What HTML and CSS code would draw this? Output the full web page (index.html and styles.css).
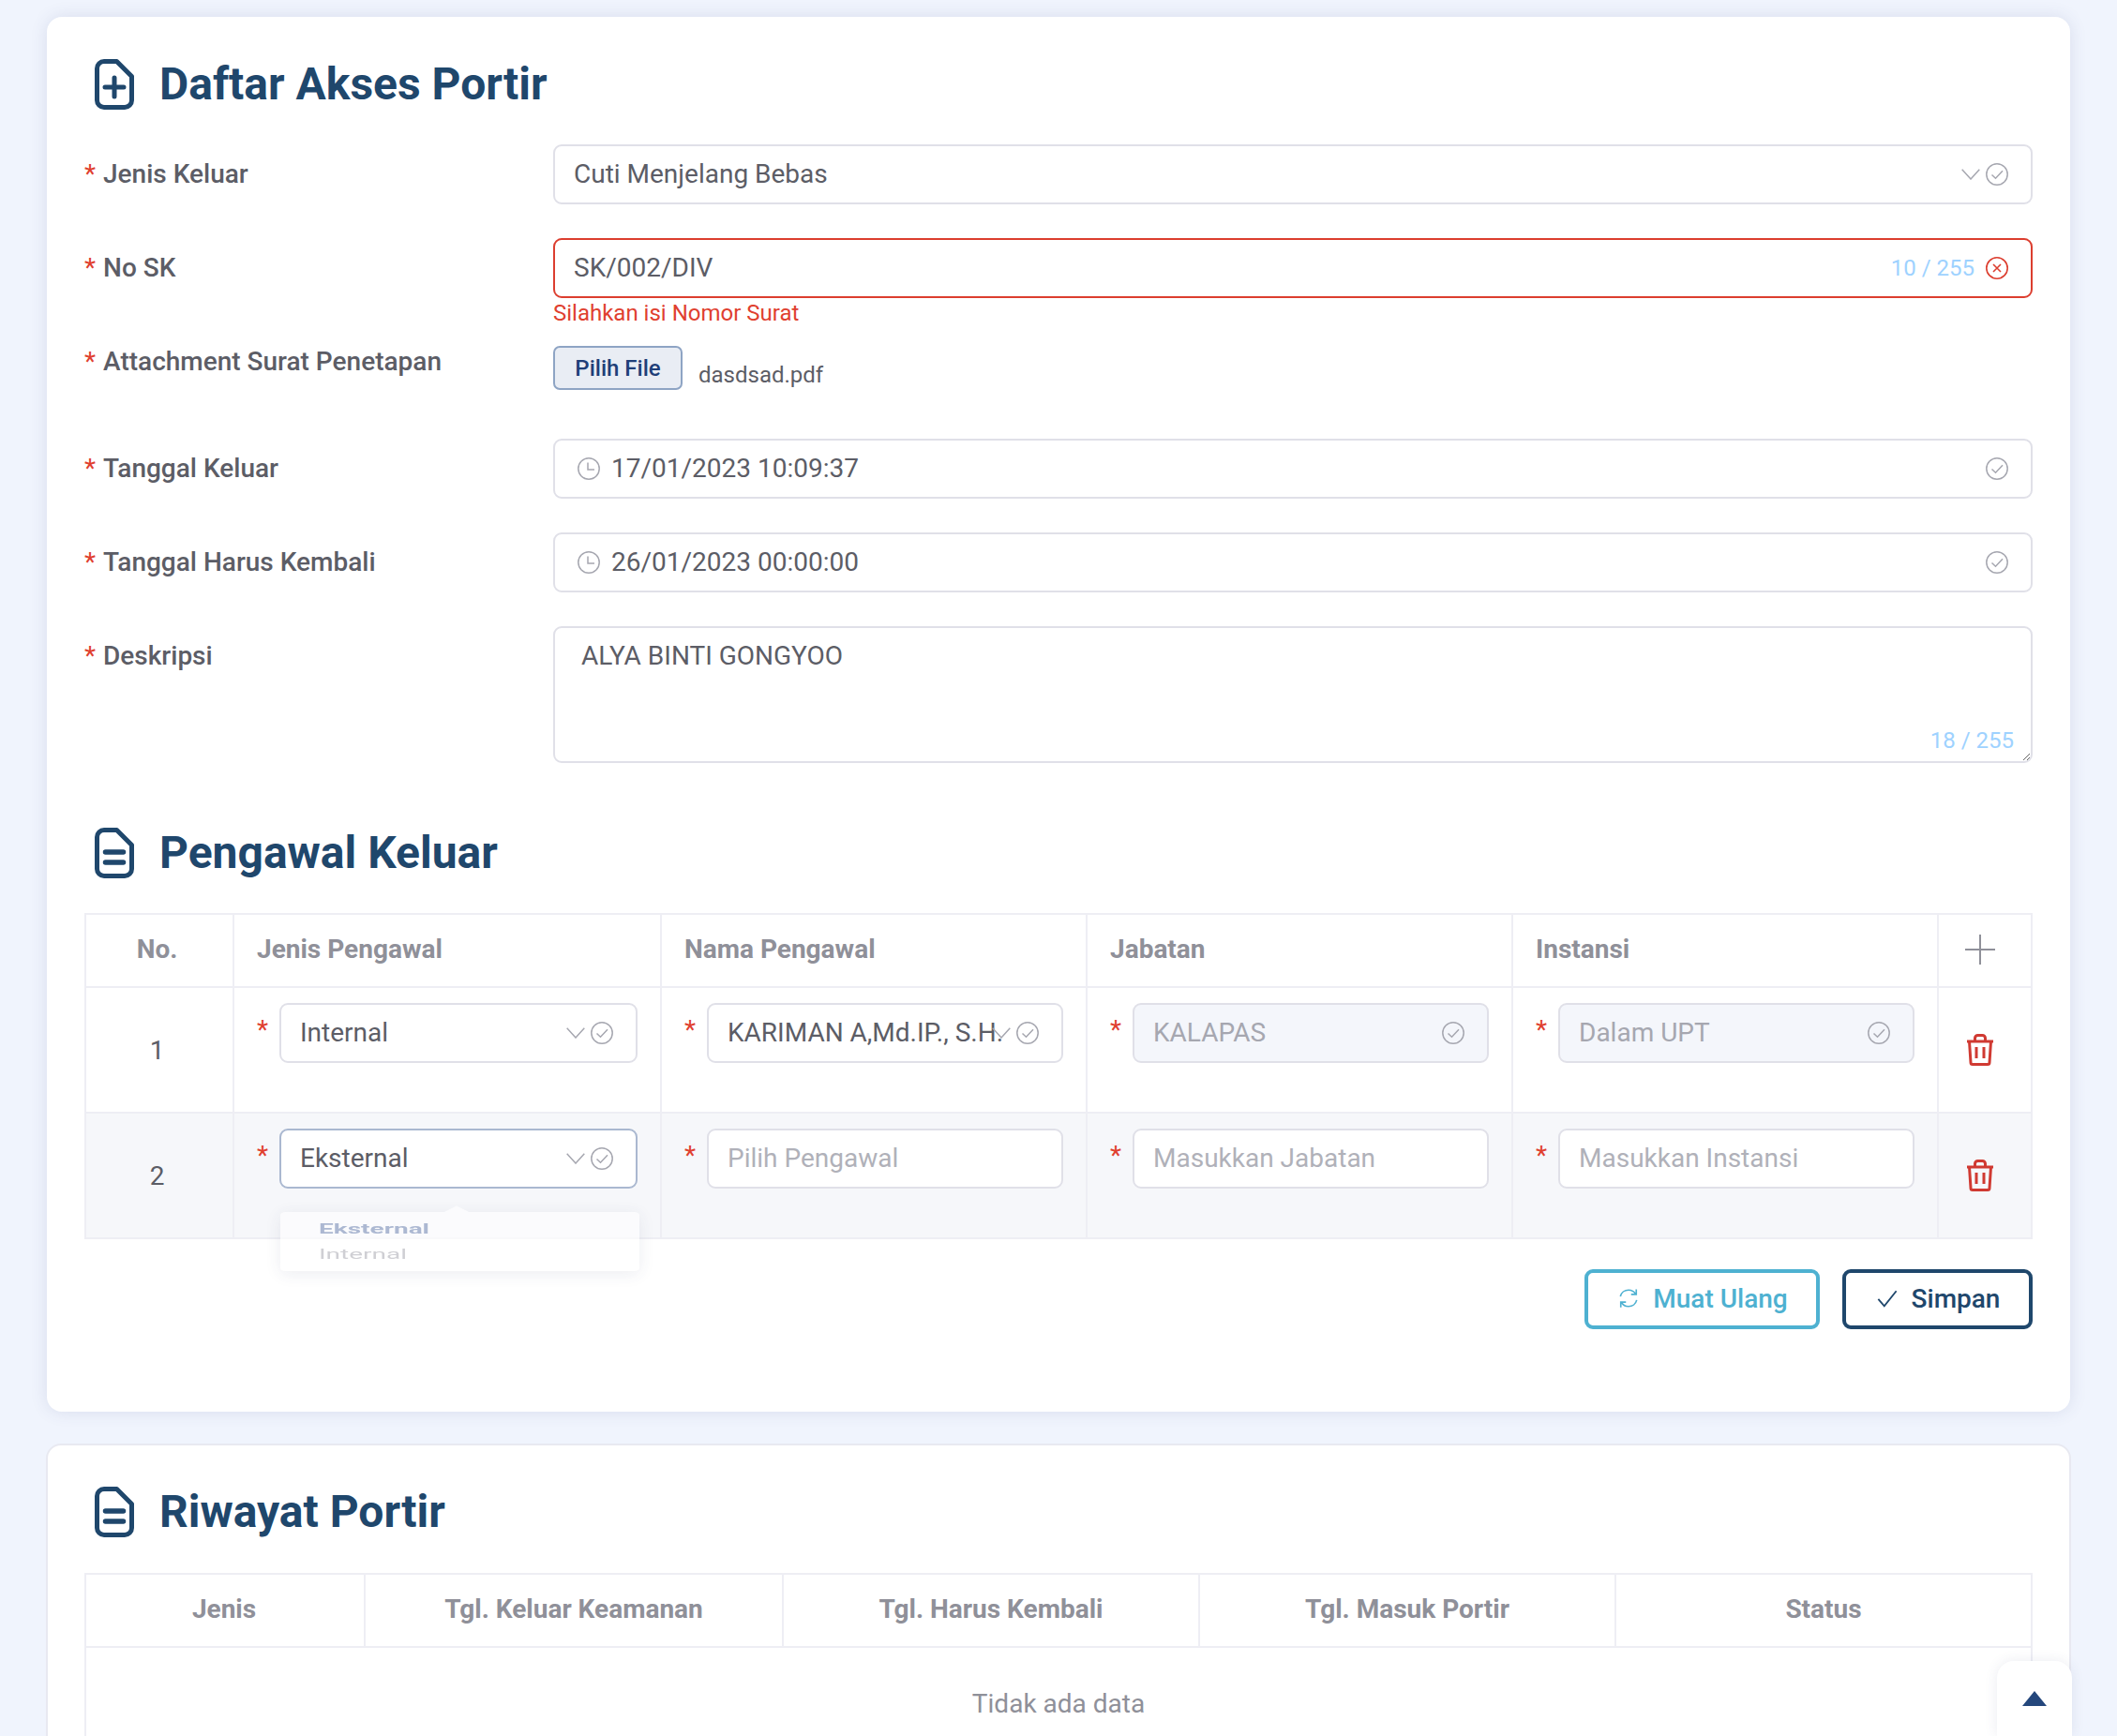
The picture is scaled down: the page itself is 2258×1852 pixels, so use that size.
FILE: index.html
```html
<!DOCTYPE html>
<html lang="id">
<head>
<meta charset="utf-8">
<title>Daftar Akses Portir</title>
<link rel="stylesheet" href="styles.css">
</head>
<body>
<svg class="defs" width="0" height="0" aria-hidden="true">
  <symbol id="i-doc" viewBox="0 0 42 54"><path d="M10 2.500H23.500L39.500 18.500V44a7.500 7.500 0 0 1-7.500 7.500H10A7.500 7.500 0 0 1 2.500 44V10A7.500 7.500 0 0 1 10 2.500z" fill="none" stroke="currentColor" stroke-width="5" stroke-linejoin="round"/></symbol>
  <symbol id="i-chev" viewBox="0 0 20 12"><path d="M.7.8 10 11 19.300.8" fill="none" stroke="currentColor" stroke-width="1.500"/></symbol>
  <symbol id="i-ok" viewBox="0 0 24 24"><circle cx="12" cy="12" r="11.200" fill="none" stroke="currentColor" stroke-width="1.500"/><path d="M6.500 12.500l4 3.800 7.500-8" fill="none" stroke="currentColor" stroke-width="1.500"/></symbol>
  <symbol id="i-err" viewBox="0 0 24 24"><circle cx="12" cy="12" r="11.200" fill="none" stroke="currentColor" stroke-width="1.600"/><path d="M8 8l8 8M16 8l-8 8" fill="none" stroke="currentColor" stroke-width="1.600"/></symbol>
  <symbol id="i-clock" viewBox="0 0 24 24"><circle cx="12" cy="12" r="11.200" fill="none" stroke="currentColor" stroke-width="1.500"/><path d="M11 5.500V13h7" fill="none" stroke="currentColor" stroke-width="1.500"/></symbol>
  <symbol id="i-trash" viewBox="0 0 30 34"><path d="M1 8h28M9.500 7V4.500a3 3 0 0 1 3-3h5a3 3 0 0 1 3 3V7M3.500 8l1.500 22.500a2 2 0 0 0 2 2h16a2 2 0 0 0 2-2L26.500 8M11 14v12M19 14v12" fill="none" stroke="currentColor" stroke-width="3"/></symbol>
</svg>

<main class="page">
  <section class="card">
    <h1 class="title">
      <svg class="title-icon"><use href="#i-doc"/><path d="M21 20v20M11 30h20" stroke="currentColor" stroke-width="5" stroke-linecap="round"/></svg>
      Daftar Akses Portir
    </h1>

    <div class="row">
      <div class="label"><span class="req">*</span>Jenis Keluar</div>
      <div class="control">
        <div class="input"><span class="val">Cuti Menjelang Bebas</span><svg class="chev"><use href="#i-chev"/></svg><svg class="ok"><use href="#i-ok"/></svg></div>
      </div>
    </div>

    <div class="row">
      <div class="label"><span class="req">*</span>No SK</div>
      <div class="control">
        <div class="input input-error"><span class="val">SK/002/DIV</span><span class="count">10 / 255</span><svg class="ok"><use href="#i-err"/></svg></div>
        <div class="error">Silahkan isi Nomor Surat</div>
      </div>
    </div>

    <div class="row row-file">
      <div class="label"><span class="req">*</span>Attachment Surat Penetapan</div>
      <div class="control file-control">
        <button class="file-btn" type="button">Pilih File</button>
        <span class="file-name">dasdsad.pdf</span>
      </div>
    </div>

    <div class="row">
      <div class="label"><span class="req">*</span>Tanggal Keluar</div>
      <div class="control">
        <div class="input"><svg class="clock"><use href="#i-clock"/></svg><span class="val">17/01/2023 10:09:37</span><svg class="ok"><use href="#i-ok"/></svg></div>
      </div>
    </div>

    <div class="row">
      <div class="label"><span class="req">*</span>Tanggal Harus Kembali</div>
      <div class="control">
        <div class="input"><svg class="clock"><use href="#i-clock"/></svg><span class="val">26/01/2023 00:00:00</span><svg class="ok"><use href="#i-ok"/></svg></div>
      </div>
    </div>

    <div class="row row-area">
      <div class="label"><span class="req">*</span>Deskripsi</div>
      <div class="control area-wrap">
        <textarea class="area" rows="3">ALYA BINTI GONGYOO</textarea>
        <span class="count area-count">18 / 255</span>
      </div>
    </div>

    <h2 class="title title-second">
      <svg class="title-icon"><use href="#i-doc"/><path d="M11.500 26h19M11.500 37h19" stroke="currentColor" stroke-width="5.500" stroke-linecap="round"/></svg>
      Pengawal Keluar
    </h2>

    <table class="grid grid-escort">
      <colgroup><col class="c-no"><col class="c-wide"><col class="c-mid"><col class="c-mid"><col class="c-mid"><col class="c-act"></colgroup>
      <thead>
        <tr>
          <th class="center cell-no">No.</th><th>Jenis Pengawal</th><th>Nama Pengawal</th><th>Jabatan</th><th>Instansi</th>
          <th class="center cell-act"><svg class="plus" viewBox="0 0 32 32"><path d="M16 0v32M0 16h32" stroke="currentColor" stroke-width="2"/></svg></th>
        </tr>
      </thead>
      <tbody>
        <tr>
          <td class="center cell-no">1</td>
          <td class="cell-field"><div class="field"><span class="req">*</span><div class="input"><span class="val">Internal</span><svg class="chev"><use href="#i-chev"/></svg><svg class="ok"><use href="#i-ok"/></svg></div></div></td>
          <td class="cell-field"><div class="field"><span class="req">*</span><div class="input"><span class="val">KARIMAN A,Md.IP., S.H.</span><svg class="chev"><use href="#i-chev"/></svg><svg class="ok"><use href="#i-ok"/></svg></div></div></td>
          <td class="cell-field"><div class="field"><span class="req">*</span><div class="input input-off"><span class="val">KALAPAS</span><svg class="ok"><use href="#i-ok"/></svg></div></div></td>
          <td class="cell-field"><div class="field"><span class="req">*</span><div class="input input-off"><span class="val">Dalam UPT</span><svg class="ok"><use href="#i-ok"/></svg></div></div></td>
          <td class="center cell-act"><svg class="trash"><use href="#i-trash"/></svg></td>
        </tr>
        <tr class="row-alt">
          <td class="center cell-no">2</td>
          <td class="cell-field"><div class="field"><span class="req">*</span>
            <div class="input input-focus"><span class="val">Eksternal</span><svg class="chev"><use href="#i-chev"/></svg><svg class="ok"><use href="#i-ok"/></svg>
              <div class="dropdown"><div class="opt opt-on">Eksternal</div><div class="opt">Internal</div></div>
            </div></div></td>
          <td class="cell-field"><div class="field"><span class="req">*</span><div class="input"><span class="val ph">Pilih Pengawal</span></div></div></td>
          <td class="cell-field"><div class="field"><span class="req">*</span><div class="input"><span class="val ph">Masukkan Jabatan</span></div></div></td>
          <td class="cell-field"><div class="field"><span class="req">*</span><div class="input"><span class="val ph">Masukkan Instansi</span></div></div></td>
          <td class="center cell-act"><svg class="trash"><use href="#i-trash"/></svg></td>
        </tr>
      </tbody>
    </table>

    <div class="actions">
      <button class="btn btn-reload" type="button">
        <svg class="btn-icon" viewBox="0 0 24 24"><path d="M2.500 10C3.500 5.500 7.500 2.500 12 2.500c3.500 0 6.500 1.700 8 4.500M21.500 14c-1 4.500-5 7.500-9.500 7.500-3.500 0-6.500-1.700-8-4.500M21 1.500V7.500h-6M3 22.500V16.500h6" fill="none" stroke="currentColor" stroke-width="1.800"/></svg>
        Muat Ulang
      </button>
      <button class="btn btn-save" type="button">
        <svg class="btn-icon" viewBox="0 0 24 24"><path d="M1.500 13l7 8L22.500 3.500" fill="none" stroke="currentColor" stroke-width="2"/></svg>
        Simpan
      </button>
    </div>
  </section>

  <section class="card card-second">
    <h2 class="title">
      <svg class="title-icon"><use href="#i-doc"/><path d="M11.500 26h19M11.500 37h19" stroke="currentColor" stroke-width="5.500" stroke-linecap="round"/></svg>
      Riwayat Portir
    </h2>
    <table class="grid grid-history">
      <colgroup><col class="h1"><col class="h2"><col class="h3"><col class="h3"><col class="h3"></colgroup>
      <thead>
        <tr><th class="center cell-first">Jenis</th><th class="center">Tgl. Keluar Keamanan</th><th class="center">Tgl. Harus Kembali</th><th class="center">Tgl. Masuk Portir</th><th class="center">Status</th></tr>
      </thead>
      <tbody>
        <tr><td colspan="5" class="empty">Tidak ada data</td></tr>
      </tbody>
    </table>
  </section>
</main>

<button class="top-btn" type="button" aria-label="Ke atas"><span class="top-arrow"></span></button>
</body>
</html>
```

FILE: styles.css
```css
* { box-sizing: border-box; }
html, body { margin: 0; height: 1852px; overflow: hidden; }
body {
  position: relative;
  background: #f0f4fd;
  font-family: Roboto, "Liberation Sans", sans-serif;
  font-size: 28px;
  color: #5c5d66;
}
.defs { position: absolute; }
.page {
  display: flex;
  flex-direction: column;
  gap: 34px;
  height: 1852px;
  padding: 18px 50px 0;
  overflow: hidden;
}
.card {
  flex: none;
  background: #fff;
  border-radius: 16px;
  padding: 45px 40px 88px;
  box-shadow: 0 0 18px rgba(60, 70, 120, .13);
}
.card-second {
  margin: 0 -1px;
  border: 2px solid #e8e9f1;
  padding: 44px 39px 40px;
  box-shadow: none;
}
.card-second .title { margin-bottom: 38px; }

.title {
  display: flex;
  align-items: center;
  gap: 27px;
  height: 54px;
  margin: 0 0 37px;
  padding-left: 11px;
  font-size: 48px;
  line-height: 52px;
  font-weight: 700;
  color: #1f476c;
}
.title-second { margin-top: 69px; }
.title-icon { width: 42px; height: 54px; flex: none; }

.row { display: flex; height: 100px; }
.row-file { height: 114px; }
.row-area { height: auto; }
.label { width: 500px; flex: none; height: 64px; line-height: 63px; font-weight: 500; }
.label .req { margin-right: 8px; }
.req { color: #e0402f; font-weight: 400; }
.control { flex: 1; min-width: 0; }

.input {
  position: relative;
  display: flex;
  align-items: center;
  height: 64px;
  padding: 0 24px 0 20px;
  background: #fff;
  border: 2px solid #e0e0e8;
  border-radius: 9px;
}
.input-error { border-color: #dc3e2f; }
.input-error .ok { color: #dc3e2f; }
.input-focus { border-color: #aab8d0; }
.input-off { background: #f4f6fb; color: #a6a7b0; }
.val { flex: 1; min-width: 0; margin-top: -2px; white-space: nowrap; }
.ph { color: #b0b1b9; }
.chev { width: 20px; height: 12px; color: #a6a7b0; flex: none; margin-right: 6px; position: relative; }
.ok { width: 24px; height: 24px; color: #a6a7b0; flex: none; }
.clock { width: 24px; height: 24px; color: #a6a7b0; flex: none; margin: 0 12px 0 4px; }
.count { color: #9ed2ff; font-size: 24px; margin-right: 12px; }
.error { color: #e0402f; font-size: 24px; line-height: 32px; }

.file-control { display: flex; align-items: flex-start; padding-top: 15px; }
.file-btn {
  height: 47px;
  width: 138px;
  padding: 0;
  border: 2px solid #8ea4c4;
  border-radius: 7px;
  background: #e9edf4;
  color: #1f3f78;
  font: 500 24px Roboto, sans-serif;
}
.file-name { margin: 19px 0 0 17px; font-size: 24px; line-height: 24px; }

.area-wrap { position: relative; }
.area {
  display: block;
  width: 100%;
  height: 146px;
  padding: 14px 28px;
  border: 2px solid #e0e0e8;
  border-radius: 9px;
  font: 28px/32px Roboto, sans-serif;
  color: #5c5d66;
  resize: vertical;
  outline: none;
}
.area-count { position: absolute; right: 20px; bottom: 8px; margin: 0; line-height: 32px; }

.grid {
  width: 2078px;
  table-layout: fixed;
  border-collapse: separate;
  border-spacing: 0;
  border-top: 2px solid #eeeef4;
  border-left: 2px solid #eeeef4;
}
.grid th, .grid td { border-right: 2px solid #eeeef4; border-bottom: 2px solid #eeeef4; padding: 0 24px; }
.grid th {
  height: 78px;
  padding-bottom: 3px;
  text-align: left;
  font-weight: 700;
  color: #8f9099;
}
.grid .center { text-align: center; padding-left: 0; padding-right: 0; }
.grid .cell-no { padding-right: 5px; }
.grid .cell-first { padding-right: 2px; }
.grid .cell-act { padding-right: 10px; }
.grid-escort td { height: 134px; }
.c-no { width: 158px; }
.c-wide { width: 456px; }
.c-mid { width: 454px; }
.c-act { width: 100px; }
.h1 { width: 298px; }
.h2 { width: 446px; }
.h3 { width: 444px; }
.row-alt td { background: #f6f7fa; }
.grid .cell-field { vertical-align: top; padding: 16px 24px 0; }
.field { display: flex; }
.field .req { width: 24px; flex: none; line-height: 58px; }
.field .input { flex: 1; min-width: 0; }
.field .val { width: 0; }
.plus { display: block; width: 32px; height: 32px; margin: 0 auto; color: #8f9099; }
.trash { display: block; width: 30px; height: 34px; margin: 0 auto; color: #d03a32; }
.empty { height: 120px; text-align: center; color: #8f9099; }

.dropdown {
  position: absolute;
  z-index: 5;
  left: -1px;
  top: 87px;
  width: 383px;
  height: 126px;
  padding: 10px 0;
  background: #fff;
  border-radius: 6px;
  opacity: .62;
  box-shadow: 0 6px 26px rgba(60, 70, 110, .16);
  transform: scaleY(.5);
  transform-origin: top;
  filter: blur(.4px);
}
.dropdown::before {
  content: "";
  position: absolute;
  left: 178px;
  top: -9px;
  width: 20px;
  height: 20px;
  background: #fff;
  transform: rotate(45deg);
}
.opt { height: 53px; line-height: 53px; padding-left: 41px; color: #b3b3ba; }
.opt-on { color: #7f92ba; font-weight: 700; }

.actions { display: flex; justify-content: flex-end; gap: 24px; margin-top: 32px; }
.btn {
  display: flex;
  align-items: center;
  justify-content: center;
  gap: 15px;
  height: 64px;
  padding: 0 0 2px;
  background: #fff;
  border: 4px solid;
  border-radius: 9px;
  font: 500 28px Roboto, sans-serif;
}
.btn-icon { width: 22px; height: 22px; flex: none; }
.btn-reload { width: 251px; padding-left: 2px; color: #4eb1d1; border-color: #4eb1d1; }
.btn-save { width: 203px; padding-left: 2px; color: #1f476c; border-color: #1f476c; }

.top-btn {
  position: absolute;
  left: 2130px;
  top: 1772px;
  display: flex;
  justify-content: center;
  align-items: flex-start;
  width: 80px;
  height: 80px;
  padding: 32px 0 0;
  background: #fff;
  border: 0;
  border-radius: 18px 18px 0 0;
  box-shadow: 0 0 14px rgba(60, 70, 120, .1);
}
.top-arrow {
  display: block;
  width: 0;
  height: 0;
  border: 13px solid transparent;
  border-top: 0;
  border-bottom: 16px solid #24477c;
}
```
